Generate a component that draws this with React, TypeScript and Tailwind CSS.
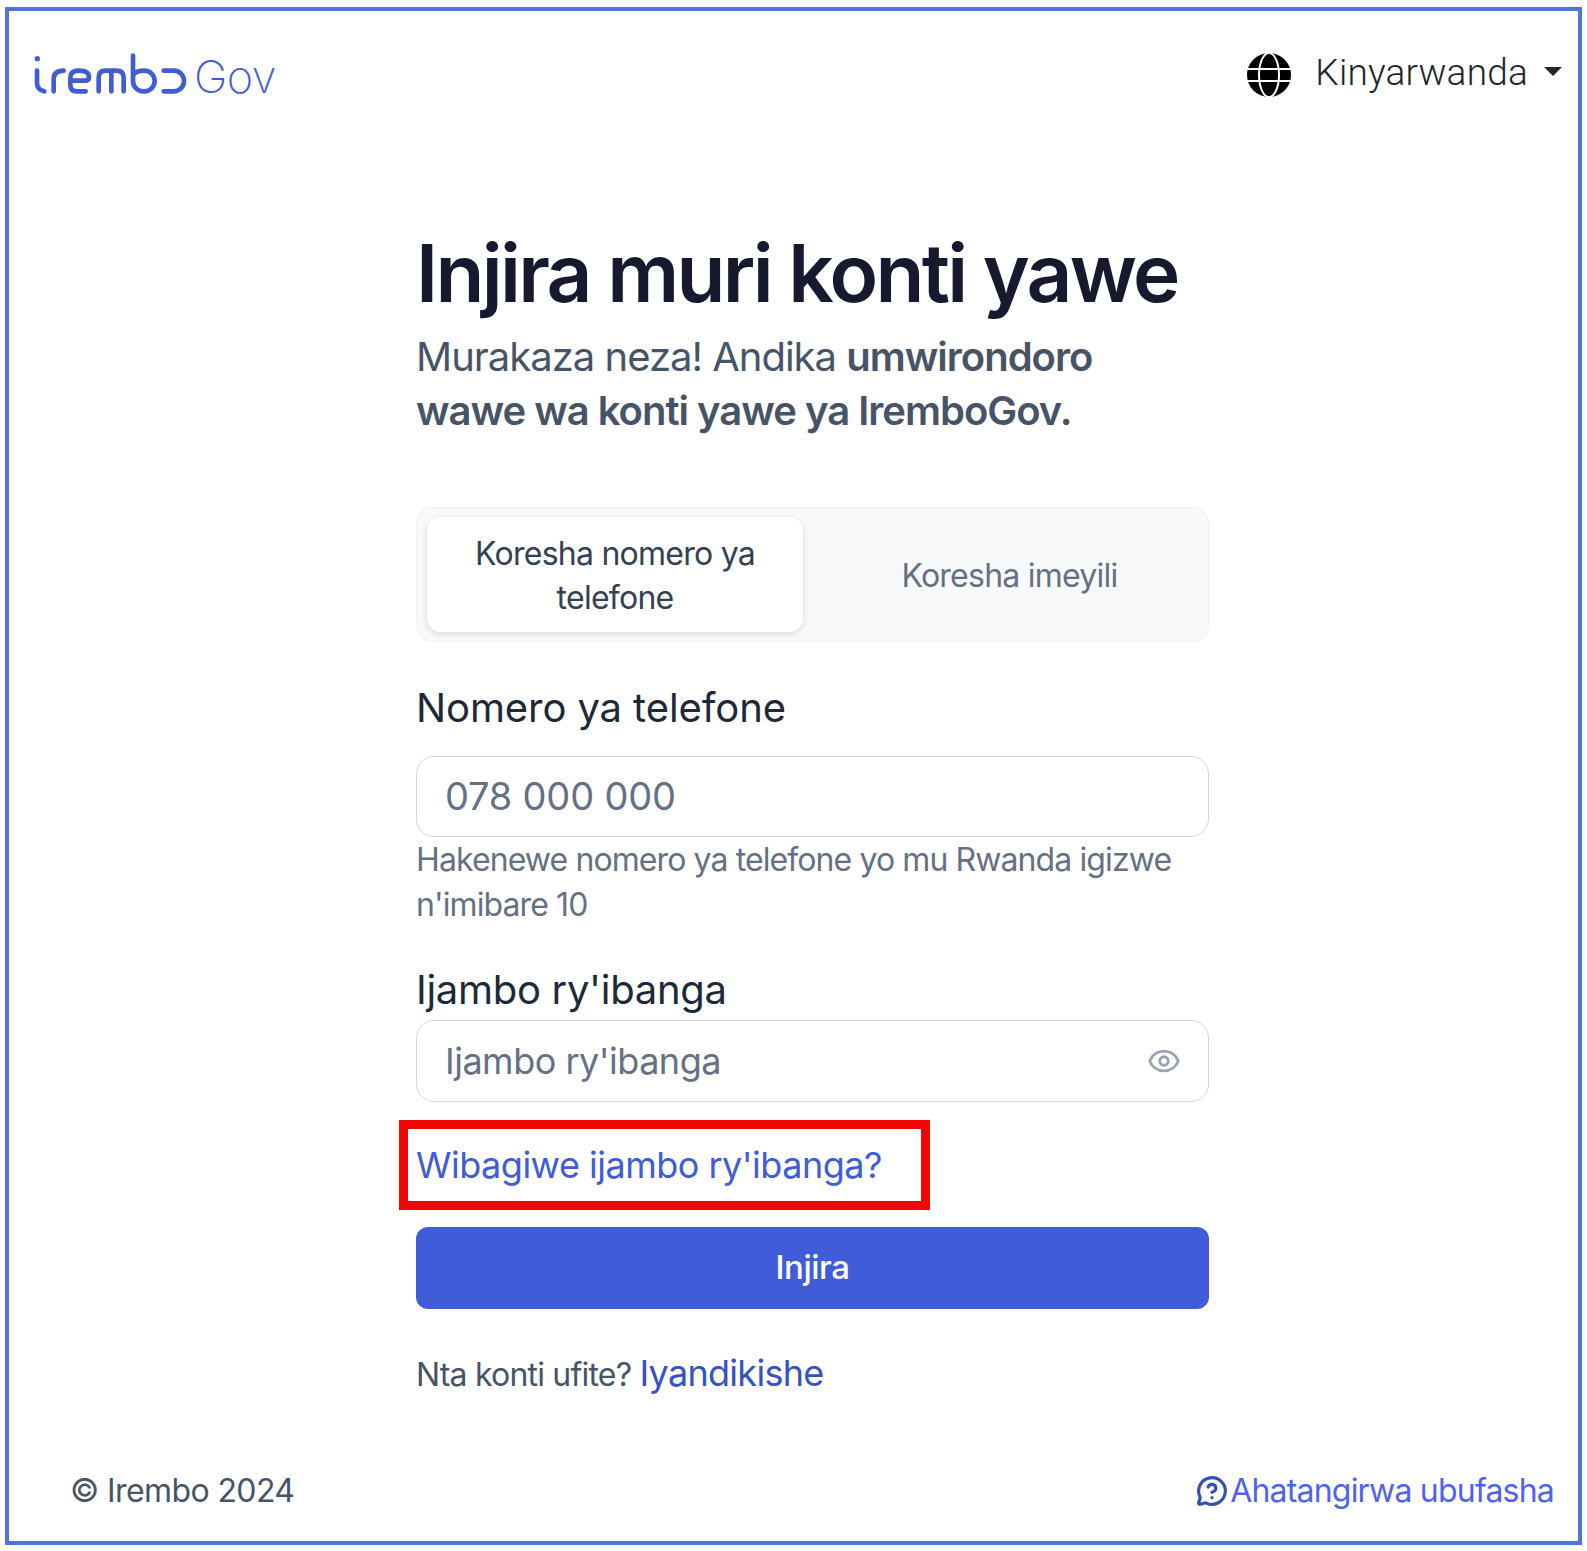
import { Eye, MessageCircleQuestion } from 'lucide-react';

const sans = 'font-["Inter","Noto_Sans",sans-serif]';

function Logo() {
    return (
        <svg width="160" height="44" viewBox="100 150 480 132" fill="none" stroke="#405cd8" strokeWidth="14" strokeLinecap="round" strokeLinejoin="round">
            <circle cx="113" cy="167" r="8" fill="#405cd8" stroke="none" />
            <path d="M112 203V240Q112 260 134 265" />
            <path d="M162 265V228Q162 203 192 203" />
            <path d="M258 265H232Q212 265 212 245V224Q212 203 238 203Q268 203 268 222Q268 233 256 233H214" />
            <path d="M297 265V224Q297 203 318 203H350Q372 203 372 224V265M335 203V265" />
            <path d="M400 158V234A31 31 0 0 0 431 265H434A31 31 0 0 0 434 203H431Q408 203 400 218" />
            <path d="M492 203H522A31 31 0 0 1 522 265H492" />
        </svg>
    );
}

function Globe() {
    return (
        <svg width="44" height="44" viewBox="0 0 44 44" fill="none">
            <circle cx="22" cy="22" r="22" fill="#000" />
            <g stroke="#fff" strokeWidth="2">
                <ellipse cx="22" cy="22" rx="10" ry="22" />
                <path d="M0 16H44M0 28H44" />
            </g>
        </svg>
    );
}

export default function App() {
    return (
        <div className={`h-[1551px] bg-white pt-[7px] pb-[6px] px-[5px] ${sans}`}>
            <div className="flex h-full flex-col border-4 border-[#4f75d9]">
                <header className="flex h-[128px] items-center justify-between pr-[16px] pl-[24px]">
                    <div className="flex items-center gap-[1px]">
                        <Logo />
                        <span className="mt-[2px] font-['Inter'] text-[45px] leading-none font-extralight tracking-[-0.5px] text-[#405cd8]">Gov</span>
                    </div>
                    <div className="flex items-center">
                        <Globe />
                        <span className="mb-[6px] ml-[24px] font-['Roboto'] text-[37px] leading-none font-light tracking-[0.2px] text-[#212529]">Kinyarwanda</span>
                        <span className="mb-[8px] ml-[16px] h-0 w-0 border-x-[9px] border-t-[9px] border-x-transparent border-t-[#212529]" />
                    </div>
                </header>

                <main className="ml-[407px] w-[793px]">
                    <h1 className="mt-[92px] text-[80px] leading-[84px] font-semibold tracking-[-2.7px] whitespace-nowrap text-[#171a2e]">Injira muri konti yawe</h1>
                    <p className="mt-[15px] w-[720px] text-[40px] leading-[54px] tracking-[-1px] text-[#475467]">
                        Murakaza neza! Andika <span className="font-semibold">umwirondoro wawe wa konti yawe ya IremboGov.</span>
                    </p>

                    <div className="mt-[69px] flex h-[135px] items-center rounded-[16px] border border-[#f0f1f5] bg-[#f8f9fb] pl-[10px]">
                        <button className="h-[115px] w-[376px] rounded-[14px] bg-white px-[40px] pt-[2px] text-[32px] leading-[44px] tracking-[-0.75px] text-[#344054] shadow-[0_2px_6px_rgba(16,24,40,0.14)]">
                            Koresha nomero ya telefone
                        </button>
                        <button className="flex-1 pt-[2px] pl-[8px] text-[32px] leading-[44px] tracking-[-0.75px] text-[#667085]">Koresha imeyili</button>
                    </div>

                    <label className="mt-[42px] block text-[40px] leading-[48px] tracking-[-0.1px] text-[#1d2939]">Nomero ya telefone</label>
                    <div className="mt-[24px] flex h-[81px] items-center rounded-[18px] border border-[#d0d5dd] pl-[28px] text-[38px] tracking-[-0.2px] text-[#667085]">078 000 000</div>
                    <p className="text-[32px] leading-[45px] tracking-[-0.9px] text-[#667085]">
                        Hakenewe nomero ya telefone yo mu Rwanda igizwe n'imibare 10
                    </p>

                    <label className="mt-[39px] block text-[40px] leading-[48px] tracking-[-0.3px] text-[#1d2939]">Ijambo ry'ibanga</label>
                    <div className="mt-[6px] flex h-[82px] items-center justify-between rounded-[18px] border border-[#d0d5dd] pr-[27px] pl-[28px] text-[36px] tracking-[-0.5px] text-[#667085]">
                        Ijambo ry'ibanga
                        <Eye size={34} strokeWidth={2} className="text-[#98a2b3]" />
                    </div>

                    <div className="mt-[18px] -ml-[17px] flex h-[90px] w-[531px] items-center border-[9px] border-[#f20505] pl-[8px]">
                        <a className="text-[36px] leading-none tracking-[-0.5px] whitespace-nowrap text-[#405cd8]">Wibagiwe ijambo ry'ibanga?</a>
                    </div>

                    <button className="mt-[17px] h-[82px] w-full rounded-[12px] bg-[#405cd8] text-[33px] font-medium tracking-[-0.5px] text-white">Injira</button>

                    <p className="mt-[40px] text-[32px] leading-[48px] tracking-[-0.8px] text-[#475467]">
                        Nta konti ufite? <a className="text-[36px] tracking-[-0.7px] text-[#3551c5]">Iyandikishe</a>
                    </p>
                </main>

                <footer className="mt-auto mb-[28px] flex items-center justify-between pr-[24px] pl-[61px]">
                    <span className="text-[32px] leading-[44px] tracking-[-0.6px] text-[#475467]">© Irembo 2024</span>
                    <span className="flex items-center text-[32px] leading-[44px] tracking-[-0.8px] text-[#4f62f5]">
                        <MessageCircleQuestion size={32} strokeWidth={2.4} className="mr-[2px] text-[#3551b5]" />
                        Ahatangirwa ubufasha
                    </span>
                </footer>
            </div>
        </div>
    );
}
